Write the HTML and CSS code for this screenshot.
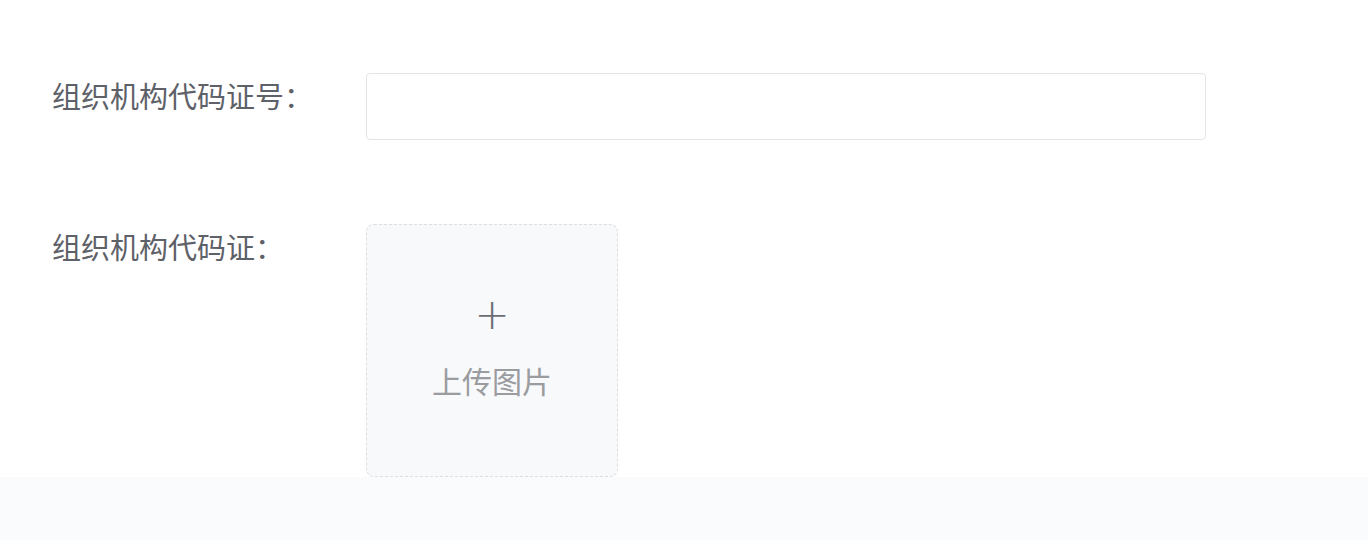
FILE: index.html
```html
<!DOCTYPE html>
<html lang="zh-CN">
<head>
    <meta charset="UTF-8">
    <meta name="viewport" content="width=device-width, initial-scale=1.0">
    <title>组织机构代码证</title>
    <link rel="stylesheet" href="styles.css">
</head>
<body>
    <div class="form">
        <div class="form-item">
            <label class="form-label">组织机构代码证号：</label>
            <div class="form-content">
                <input class="text-input" type="text">
            </div>
        </div>

        <div class="form-item upload-row">
            <label class="form-label">组织机构代码证：</label>
            <div class="form-content">
                <div class="uploader">
                    <span class="plus">+</span>
                    <span class="upload-text">上传图片</span>
                </div>
            </div>
        </div>
    </div>

    <div class="footer-band"></div>
</body>
</html>
```

FILE: styles.css
```css
body {
    margin: 0;
    background: #ffffff;
    font-family: "Noto Sans CJK SC", "Noto Sans", sans-serif;
}
.form {
    padding: 73px 0 0 52px;
}
.form-item {
    display: flex;
    align-items: flex-start;
}
.upload-row {
    margin-top: 84px;
}
.form-label {
    width: 314px;
    flex-shrink: 0;
    font-size: 29px;
    line-height: 44px;
    color: #5e6168;
}
.text-input {
    display: block;
    box-sizing: border-box;
    width: 840px;
    height: 67px;
    border: 1px solid #e2e4e8;
    border-radius: 4px;
    background: #fff;
    outline: none;
}
.uploader {
    box-sizing: border-box;
    width: 252px;
    height: 253px;
    border: 1px dashed #dcdee2;
    border-radius: 8px;
    background: #f8f9fb;
    display: flex;
    flex-direction: column;
    align-items: center;
    padding-top: 70px;
}
.plus {
    font-size: 42px;
    line-height: 40px;
    font-weight: 300;
    color: #6b6e73;
    font-family: "DejaVu Sans", sans-serif;
}
.upload-text {
    margin-top: 25px;
    font-size: 30px;
    line-height: 40px;
    color: #9a9ca0;
}
.footer-band {
    height: 64px;
    background: #fafbfd;
}
```
